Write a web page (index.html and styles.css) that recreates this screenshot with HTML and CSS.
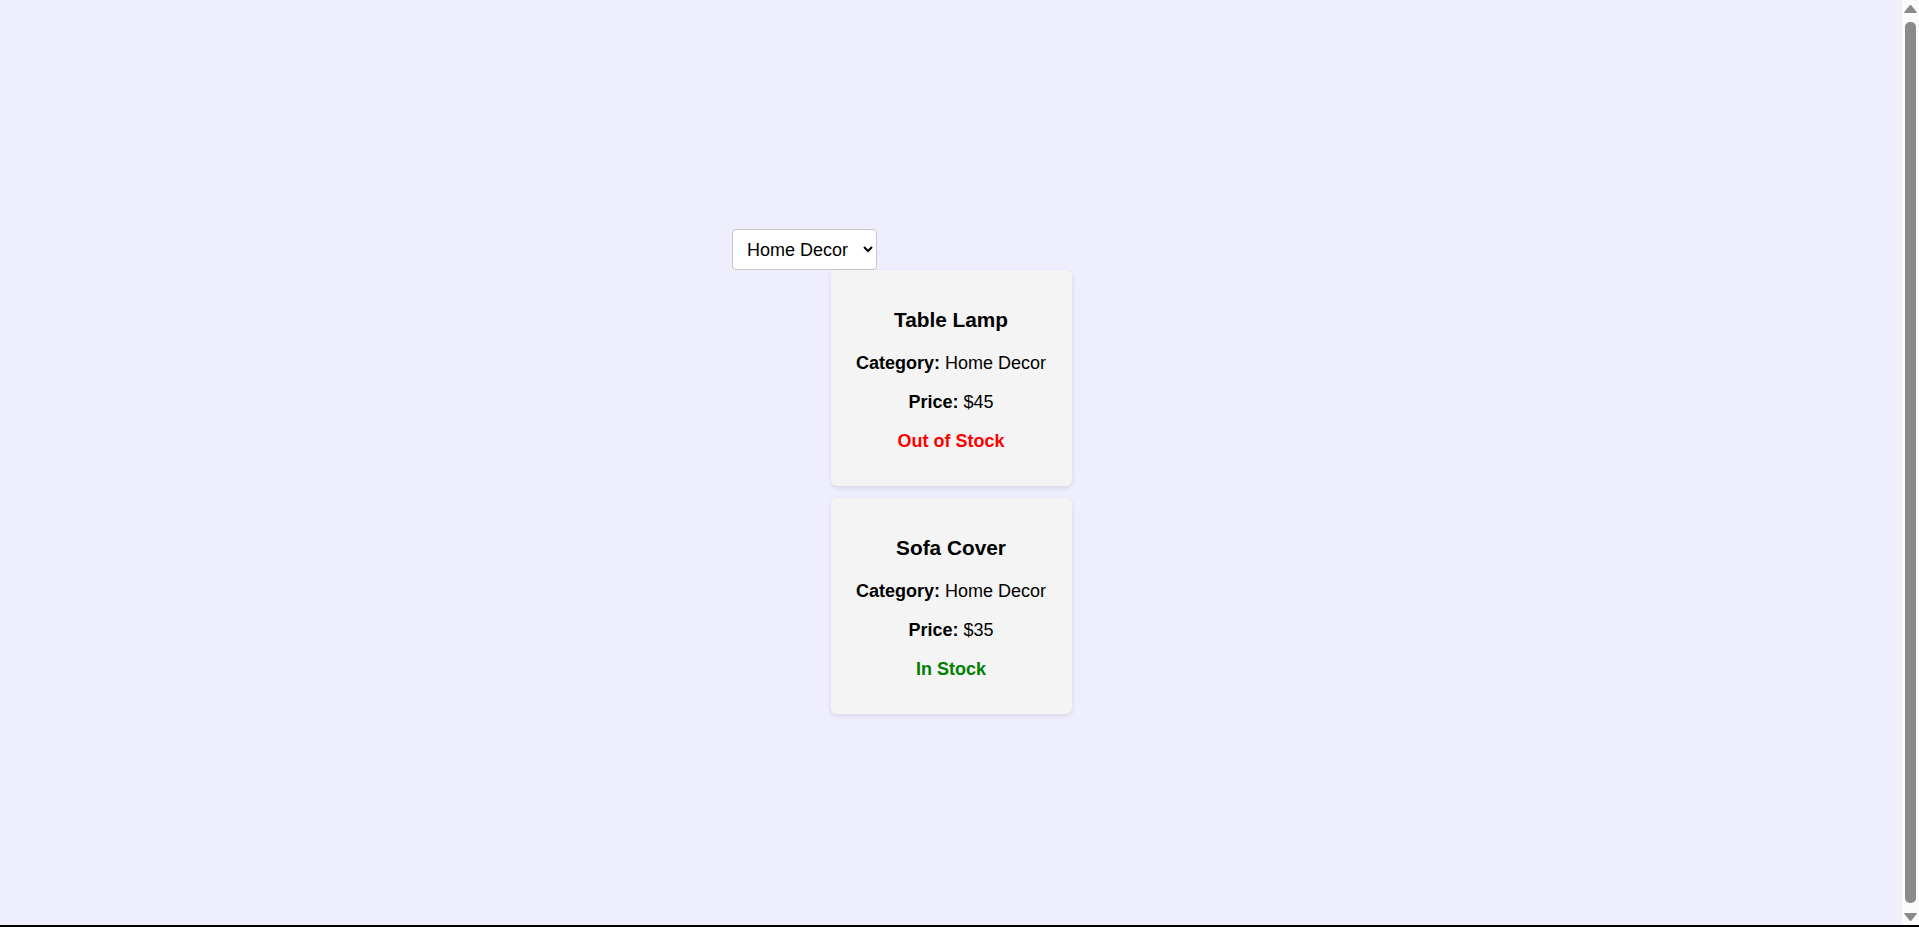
FILE: index.html
```html
<!DOCTYPE html>
<html lang="en">
<head>
<meta charset="UTF-8">
<title>Product Filter</title>
<link rel="stylesheet" href="styles.css">
</head>
<body>
<div class="app">
  <select class="filter">
    <option>All</option>
    <option>Electronics</option>
    <option selected>Home Decor</option>
  </select>
  <div class="list">
    <div class="card">
      <h3 class="title">Table Lamp</h3>
      <p class="line"><strong>Category:</strong> Home Decor</p>
      <p class="line"><strong>Price:</strong> $45</p>
      <p class="line status out">Out of Stock</p>
    </div>
    <div class="card">
      <h3 class="title">Sofa Cover</h3>
      <p class="line"><strong>Category:</strong> Home Decor</p>
      <p class="line"><strong>Price:</strong> $35</p>
      <p class="line status in">In Stock</p>
    </div>
  </div>
</div>
<div class="scrollbar" aria-hidden="true">
  <svg class="arrow" width="17" height="17" viewBox="0 0 17 17"><polygon points="2.5,12.5 8.5,5 14.5,12.5" fill="#8a8a8a" stroke="#8a8a8a" stroke-width="1" stroke-linejoin="round"/></svg>
  <div class="track"><div class="thumb"></div></div>
  <svg class="arrow" width="17" height="17" viewBox="0 0 17 17"><polygon points="2.5,3.5 14.5,3.5 8.5,11" fill="#8a8a8a" stroke="#8a8a8a" stroke-width="1" stroke-linejoin="round"/></svg>
</div>
<div class="edge" aria-hidden="true"></div>
</body>
</html>
```
FILE: styles.css
```css
html {
  background: #eeeefc;
  overflow: hidden;
}
body {
  margin: 8px 25px 8px 8px;
  height: 100vh;
  display: flex;
  justify-content: center;
  align-items: center;
  font-family: "Liberation Sans", Arial, sans-serif;
  background: #eeeefc;
  color: #000;
}
.app {
  width: 438px;
}
.filter {
  display: block;
  width: 145px;
  height: 41px;
  padding: 0 8px 0 10px;
  font-family: "Liberation Sans", Arial, sans-serif;
  font-size: 18px;
  color: #000;
  background: #fff;
  border: 1px solid #c8c8c8;
  border-radius: 4px;
}
.list {
  display: flex;
  flex-direction: column;
  align-items: center;
  gap: 12px;
}
.card {
  width: 241px;
  box-sizing: border-box;
  padding: 16px 20px;
  background: #f4f4f4;
  border-radius: 6px;
  box-shadow: 0 2px 5px rgba(0, 0, 0, 0.1);
  text-align: center;
}
.title {
  margin: 22px 0;
  font-size: 20.8px;
  line-height: 23px;
  font-weight: bold;
}
.line {
  margin: 18px 0;
  font-size: 18px;
  line-height: 21px;
}
.status {
  font-weight: bold;
}
.out {
  color: #ff0000;
}
.in {
  color: #008000;
}
.scrollbar {
  position: fixed;
  top: 0;
  right: 0;
  bottom: 0;
  width: 17px;
  display: flex;
  flex-direction: column;
  background: #fbfbfb;
}
.arrow {
  display: block;
  flex: none;
}
.track {
  flex: 1;
  padding: 5px 3px 7px 3px;
  display: flex;
}
.thumb {
  flex: 1;
  background: #8a8a8a;
  border-radius: 5px;
}
.edge {
  position: fixed;
  left: 0;
  right: 0;
  bottom: 0;
  height: 2px;
  background: #000;
}
```
